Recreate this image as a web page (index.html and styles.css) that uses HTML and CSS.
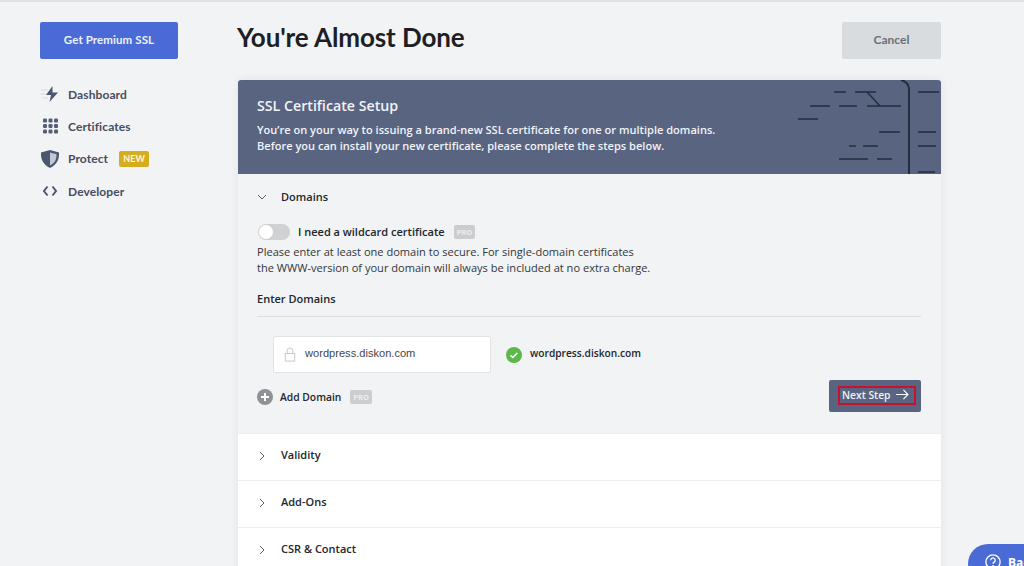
FILE: index.html
```html
<!DOCTYPE html>
<html lang="en">

<head>
  <meta charset="UTF-8" />
  <title>SSL Certificate Setup</title>
  <link rel="stylesheet" href="styles.css">
</head>

<body>
  <div class="page">
    <aside class="sidebar">
      <a class="premium">Get Premium SSL</a>
      <nav class="menu">
        <a class="menu-item">
          <svg viewBox="0 0 20 18" width="20" height="18">
            <path d="M1 5h7M0 9h6M2 13h6" stroke="#e3e6ea" stroke-width="2" fill="none" />
            <path d="M12.500 1L6 10h5l-1.500 7L18 7.500h-5.500z" fill="#4d566f" />
          </svg>
          <span>Dashboard</span>
        </a>
        <a class="menu-item">
          <svg viewBox="0 0 20 18" width="20" height="18">
            <g fill="#555d74">
              <rect x="3" y="1.500" width="4" height="4" rx="1.200" />
              <rect x="8.500" y="1.500" width="4" height="4" rx="1.200" />
              <rect x="14" y="1.500" width="4" height="4" rx="1.200" />
              <rect x="3" y="7" width="4" height="4" rx="1.200" />
              <rect x="8.500" y="7" width="4" height="4" rx="1.200" />
              <rect x="14" y="7" width="4" height="4" rx="1.200" />
              <rect x="3" y="12.500" width="4" height="4" rx="1.200" />
              <rect x="8.500" y="12.500" width="4" height="4" rx="1.200" />
              <rect x="14" y="12.500" width="4" height="4" rx="1.200" />
            </g>
          </svg>
          <span>Certificates</span>
        </a>
        <a class="menu-item">
          <svg viewBox="0 0 20 18" width="20" height="18">
            <path d="M1 2.500L10 0l9 2.500c.5 7-2.500 12.500-9 15.500C3.500 15 .5 9.500 1 2.500z" fill="#4d566f" />
            <path d="M10 2.500l6.500 1.800c.2 5-1.800 9-6.500 11.200z" fill="#c3c8d4" />
          </svg>
          <span>Protect</span>
          <em class="new">NEW</em>
        </a>
        <a class="menu-item">
          <svg viewBox="0 0 20 18" width="20" height="18">
            <path d="M7.500 4.500L4 9l3.500 4.500M12.500 4.500L16 9l-3.500 4.500" stroke="#4d566f" stroke-width="2" fill="none" />
          </svg>
          <span>Developer</span>
        </a>
      </nav>
    </aside>

    <main class="content">
      <div class="top">
        <h1>You're Almost Done</h1>
        <a class="cancel">Cancel</a>
      </div>

      <section class="card">
        <div class="banner">
          <h2>SSL Certificate Setup</h2>
          <p>You’re on your way to issuing a brand-new SSL certificate for one or multiple domains.<br>Before you can install your new certificate, please complete the steps below.</p>
          <svg class="banner-art" viewBox="0 0 143 94" width="143" height="94">
            <g stroke="#232c3f" stroke-width="1.500" fill="none">
              <path d="M36 12h12M57 12h21M69 12l13 14M12 26h20M41 26h18M69 26h34M0 39h20M81 52h21M51 66h7M65 66h15M41 79h29M79 79h15" />
              <path d="M120 12h21M120 52h18M120 66h18M120 92h17" />
              <path d="M103 0c4 1 8 4 8 10v84" stroke-width="2" />
            </g>
          </svg>
        </div>

        <div class="step open">
          <div class="step-head">
            <svg class="chev" viewBox="0 0 10 10" width="10" height="10"><path d="M1 3l4 4 4-4" /></svg>
            <span>Domains</span>
          </div>
          <div class="wildcard">
            <span class="toggle"><i></i></span>
            <b>I need a wildcard certificate</b>
            <em class="pro">PRO</em>
          </div>
          <p class="note">Please enter at least one domain to secure. For single-domain certificates<br>the WWW-version of your domain will always be included at no extra charge.</p>
          <h3>Enter Domains</h3>
          <div class="domain-row">
            <div class="domain-input">
              <svg viewBox="0 0 12 16" width="12" height="15">
                <path d="M3 7V4a3 3 0 0 1 6 0v3" stroke="#c4c6c9" fill="none" />
                <rect x="1" y="7" width="10" height="8" fill="none" stroke="#c4c6c9" />
              </svg>
              <span>wordpress.diskon.com</span>
            </div>
            <svg class="ok" viewBox="0 0 16 16" width="16" height="16">
              <circle cx="8" cy="8" r="8" fill="#5cb947" />
              <path d="M4.500 8.300l2.300 2.200 4.500-4.500" stroke="#fff" stroke-width="1.600" fill="none" />
            </svg>
            <b>wordpress.diskon.com</b>
          </div>
          <div class="step-foot">
            <a class="add">
              <svg viewBox="0 0 16 16" width="16" height="16">
                <circle cx="8" cy="8" r="8" fill="#8e9296" />
                <path d="M8 4v8M4 8h8" stroke="#fff" stroke-width="2" />
              </svg>
              <b>Add Domain</b>
              <em class="pro">PRO</em>
            </a>
            <a class="next">
              <span class="next-mark">
                Next Step
                <svg viewBox="0 0 14 12" width="13" height="11"><path d="M0 6h13M8 1l5 5-5 5" stroke="#fff" stroke-width="1.200" fill="none" /></svg>
              </span>
            </a>
          </div>
        </div>

        <div class="step">
          <div class="step-head">
            <svg class="chev" viewBox="0 0 10 10" width="10" height="10"><path d="M3 1l4 4-4 4" /></svg>
            <span>Validity</span>
          </div>
        </div>
        <div class="step">
          <div class="step-head">
            <svg class="chev" viewBox="0 0 10 10" width="10" height="10"><path d="M3 1l4 4-4 4" /></svg>
            <span>Add-Ons</span>
          </div>
        </div>
        <div class="step">
          <div class="step-head">
            <svg class="chev" viewBox="0 0 10 10" width="10" height="10"><path d="M3 1l4 4-4 4" /></svg>
            <span>CSR &amp; Contact</span>
          </div>
        </div>
      </section>
    </main>
  </div>

  <a class="help">
    <svg viewBox="0 0 18 18" width="16" height="16">
      <circle cx="9" cy="9" r="8" stroke="#fff" stroke-width="1.500" fill="none" />
      <path d="M6.500 7a2.500 2.500 0 1 1 3.800 2.100C9.400 9.700 9 10.200 9 11M9 12.500v1.500" stroke="#fff" stroke-width="1.500" fill="none" />
    </svg>
    Back
  </a>
</body>

</html>
```

FILE: styles.css
```css
html,
body {
  height: 100%;
}

body {
  margin: 0;
  overflow: hidden;
  background-color: #f1f3f5;
  border-top: 2px solid #dfe1e3;
  box-sizing: border-box;
  font-family: "Open Sans", sans-serif;
  color: #23262b;
}

.page {
  display: flex;
  padding: 20px 83px 0 40px;
}

.sidebar {
  width: 198px;
  flex-shrink: 0;
  font-family: Lato, sans-serif;
}

.premium {
  display: block;
  width: 138px;
  height: 37px;
  line-height: 36px;
  text-align: center;
  font-size: 11.500px;
  font-weight: 700;
  letter-spacing: .1px;
  color: #eef1fb;
  background-color: #4a6bd6;
  border-radius: 2px;
}

.menu {
  margin-top: 19px;
}

.menu-item {
  display: flex;
  align-items: center;
  height: 32.300px;
  font-size: 12px;
  font-weight: 700;
  letter-spacing: .1px;
  color: #464d5e;
}

.menu-item svg {
  margin-right: 8px;
}

.new {
  margin-left: 11px;
  padding: 0 4px;
  line-height: 16px;
  font-size: 9px;
  font-style: normal;
  color: #fdf6d8;
  background-color: #d5ae20;
  border-radius: 2px;
}

.content {
  flex: 1;
  min-width: 0;
}

.top {
  display: flex;
  justify-content: space-between;
  height: 58px;
}

h1 {
  margin: 0 0 0 -1px;
  font-family: Lato, sans-serif;
  font-size: 26px;
  font-weight: 700;
  line-height: 31px;
  letter-spacing: -.1px;
  color: #1d1f24;
}

.cancel {
  width: 99px;
  height: 37px;
  line-height: 35px;
  text-align: center;
  font-family: Lato, sans-serif;
  font-size: 12px;
  font-weight: 700;
  color: #6a6f76;
  background-color: #d9dcde;
  border-radius: 2px;
}

.card {
  border-radius: 3px 3px 0 0;
  box-shadow: 0 0 10px rgba(0, 0, 0, .07);
  background-color: #fff;
}

.banner {
  position: relative;
  height: 94px;
  box-sizing: border-box;
  padding: 16px 19px 0;
  color: #f1f3f7;
  background-color: #596481;
  border-radius: 3px 3px 0 0;
  overflow: hidden;
}

.banner h2 {
  margin: 0 0 7px;
  font-size: 14.200px;
  font-weight: 600;
  line-height: 19px;
}

.banner p {
  margin: 0;
  font-size: 11.050px;
  font-weight: 600;
  line-height: 16px;
}

.banner-art {
  position: absolute;
  right: 0;
  top: 0;
}

.step {
  border-bottom: 1px solid #ecedef;
}

.step.open {
  padding: 0 20px 21px 19px;
  background-color: #f1f3f5;
}

.step-head {
  display: flex;
  align-items: center;
  height: 46px;
  box-sizing: border-box;
  padding: 0 0 3px 19px;
  font-size: 11px;
  font-weight: 600;
  color: #23262b;
}

.step-head span {
  margin-bottom: 2px;
}

.step.open .step-head {
  padding: 0;
}

.chev {
  margin-right: 14px;
  fill: none;
  stroke: #5d6066;
  stroke-width: 1;
}

.wildcard {
  display: flex;
  align-items: center;
  height: 20px;
  margin-top: 1.500px;
  font-size: 11px;
}

.wildcard b,
.add b {
  font-weight: 600;
}

.toggle {
  display: block;
  width: 32px;
  height: 16px;
  box-sizing: border-box;
  padding: 1px;
  margin: 0 8px 0 1px;
  background-color: #cfd1d3;
  border-radius: 8px;
}

.toggle i {
  display: block;
  width: 14px;
  height: 14px;
  background-color: #fff;
  border-radius: 50%;
}

.pro {
  margin-left: 9px;
  padding: 0 3px;
  line-height: 14px;
  font-size: 7.500px;
  font-weight: 700;
  font-style: normal;
  color: #eceeef;
  background-color: #cbcdcf;
  border-radius: 2px;
}

.note {
  margin: 2.500px 0 0;
  font-size: 11.070px;
  line-height: 16px;
  color: #33363b;
}

h3 {
  margin: 15px 0 0;
  padding-bottom: 9px;
  border-bottom: 1px solid #dcdee0;
  font-size: 11px;
  font-weight: 600;
  line-height: 16px;
}

.domain-row {
  display: flex;
  align-items: center;
  margin: 19px 0 0 16px;
}

.domain-row b {
  margin-bottom: 3px;
  font-size: 10.200px;
  font-weight: 600;
}

.domain-input {
  display: flex;
  align-items: center;
  width: 218px;
  height: 37px;
  box-sizing: border-box;
  padding-left: 10px;
  margin-right: 15px;
  font-family: "Liberation Sans", sans-serif;
  font-size: 11.100px;
  color: #44474b;
  background-color: #fff;
  border: 1px solid #e2e3e5;
  border-radius: 2px;
}

.domain-input span {
  margin-bottom: 3px;
}

.domain-input svg {
  margin-right: 9px;
}

.ok {
  margin-right: 8px;
}

.step-foot {
  display: flex;
  justify-content: space-between;
  align-items: center;
  margin-top: 7px;
}

.add {
  display: flex;
  align-items: center;
  margin-top: 2px;
  font-size: 10.300px;
}

.add svg {
  margin-right: 7px;
}

.next {
  display: block;
  width: 92px;
  height: 32px;
  box-sizing: border-box;
  padding: 6px 5px 0 9px;
  background-color: #596481;
  border-radius: 2px;
}

.next-mark {
  display: flex;
  align-items: center;
  justify-content: space-between;
  height: 19px;
  box-sizing: border-box;
  padding: 0 5px 2px 2px;
  font-size: 10.300px;
  font-weight: 600;
  color: #eff1f5;
  border: 2px solid #c4122f;
}

.help {
  position: absolute;
  left: 968px;
  top: 544px;
  width: 90px;
  height: 40px;
  display: flex;
  align-items: flex-start;
  gap: 7px;
  box-sizing: border-box;
  padding: 10px 0 0 17px;
  font-size: 12px;
  font-weight: 700;
  color: #fff;
  background-color: #4a6bd6;
  border-radius: 20px;
}
```
